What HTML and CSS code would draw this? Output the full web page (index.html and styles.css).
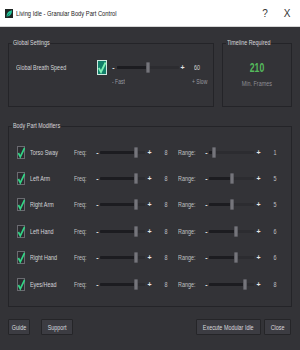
FILE: index.html
```html
<!DOCTYPE html>
<html lang="en">
<head>
    <meta charset="UTF-8">
    <meta name="viewport" content="width=device-width, initial-scale=1.0">
    <title>Living Idle - Granular Body Part Control</title>
    <link rel="stylesheet" href="styles.css">
</head>
<body>
    <div class="titlebar">
        <svg class="app-icon" width="8" height="9" viewBox="0 0 8 9">
            <rect width="8" height="9" fill="#1f2624"/>
            <path d="M1.5 7.5 C1.5 4 3.5 1.8 7 1.3 C7 4.8 5.5 7 2.5 7.5 Z" fill="#25c79c"/>
            <path d="M1.6 8 L4.5 4.3" stroke="#0f5b48" stroke-width="0.7"/>
        </svg>
        <span class="title sq">Living Idle - Granular Body Part Control</span>
        <span class="tb-btn help">?</span>
        <span class="tb-btn">X</span>
    </div>

    <div class="content">
        <div class="top-row">
            <fieldset class="group global">
                <legend><span class="sq">Global Settings</span></legend>
                <div class="breath-row">
                    <span class="breath-label sq">Global Breath Speed</span>
                    <svg class="check-big" width="10" height="15" viewBox="0 0 10 15">
                        <rect x="0.5" y="0.5" width="9" height="14" fill="#12806a" stroke="#cfe9df"/>
                        <path d="M1.8 8 L4 12 L8.6 2.5" fill="none" stroke="#7ef0b4" stroke-width="1.8"/>
                    </svg>
                    <div class="slider breath-slider">
                        <span class="minus">-</span>
                        <div class="track"><div class="fill" style="width:50%"></div><div class="handle" style="left:50%"></div></div>
                        <span class="plus">+</span>
                    </div>
                    <span class="breath-value sq">60</span>
                </div>
                <div class="hints">
                    <span class="sq">- Fast</span>
                    <span class="sq">+ Slow</span>
                </div>
            </fieldset>

            <fieldset class="group timeline">
                <legend><span class="sq">Timeline Required</span></legend>
                <div class="frames"><span class="sq-c">210</span></div>
                <div class="frames-label"><span class="sq-c">Min. Frames</span></div>
            </fieldset>
        </div>

        <fieldset class="group parts">
            <legend><span class="sq">Body Part Modifiers</span></legend>
            <div class="part-list">
                <div class="part-row">
                    <svg class="check" width="8" height="13" viewBox="0 0 8 13"><rect x="0.5" y="0.5" width="7" height="12" fill="#2b2b2f" stroke="#6a6a70"/><path d="M1.4 7 L3.3 10.8 L7.6 1.8" fill="none" stroke="#33d486" stroke-width="1.7"/></svg>
                    <span class="part-name sq">Torso Sway</span>
                    <span class="param sq">Freq:</span>
                    <div class="slider"><span class="minus">-</span><div class="track"><div class="fill" style="width:80%"></div><div class="handle" style="left:80%"></div></div><span class="plus">+</span></div>
                    <span class="value"><span class="sq-c">8</span></span>
                    <span class="param sq">Range:</span>
                    <div class="slider"><span class="minus">-</span><div class="track"><div class="fill" style="width:10%"></div><div class="handle" style="left:10%"></div></div><span class="plus">+</span></div>
                    <span class="value"><span class="sq-c">1</span></span>
                </div>
                <div class="part-row">
                    <svg class="check" width="8" height="13" viewBox="0 0 8 13"><rect x="0.5" y="0.5" width="7" height="12" fill="#2b2b2f" stroke="#6a6a70"/><path d="M1.4 7 L3.3 10.8 L7.6 1.8" fill="none" stroke="#33d486" stroke-width="1.7"/></svg>
                    <span class="part-name sq">Left Arm</span>
                    <span class="param sq">Freq:</span>
                    <div class="slider"><span class="minus">-</span><div class="track"><div class="fill" style="width:80%"></div><div class="handle" style="left:80%"></div></div><span class="plus">+</span></div>
                    <span class="value"><span class="sq-c">8</span></span>
                    <span class="param sq">Range:</span>
                    <div class="slider"><span class="minus">-</span><div class="track"><div class="fill" style="width:50%"></div><div class="handle" style="left:50%"></div></div><span class="plus">+</span></div>
                    <span class="value"><span class="sq-c">5</span></span>
                </div>
                <div class="part-row">
                    <svg class="check" width="8" height="13" viewBox="0 0 8 13"><rect x="0.5" y="0.5" width="7" height="12" fill="#2b2b2f" stroke="#6a6a70"/><path d="M1.4 7 L3.3 10.8 L7.6 1.8" fill="none" stroke="#33d486" stroke-width="1.7"/></svg>
                    <span class="part-name sq">Right Arm</span>
                    <span class="param sq">Freq:</span>
                    <div class="slider"><span class="minus">-</span><div class="track"><div class="fill" style="width:80%"></div><div class="handle" style="left:80%"></div></div><span class="plus">+</span></div>
                    <span class="value"><span class="sq-c">8</span></span>
                    <span class="param sq">Range:</span>
                    <div class="slider"><span class="minus">-</span><div class="track"><div class="fill" style="width:50%"></div><div class="handle" style="left:50%"></div></div><span class="plus">+</span></div>
                    <span class="value"><span class="sq-c">5</span></span>
                </div>
                <div class="part-row">
                    <svg class="check" width="8" height="13" viewBox="0 0 8 13"><rect x="0.5" y="0.5" width="7" height="12" fill="#2b2b2f" stroke="#6a6a70"/><path d="M1.4 7 L3.3 10.8 L7.6 1.8" fill="none" stroke="#33d486" stroke-width="1.7"/></svg>
                    <span class="part-name sq">Left Hand</span>
                    <span class="param sq">Freq:</span>
                    <div class="slider"><span class="minus">-</span><div class="track"><div class="fill" style="width:80%"></div><div class="handle" style="left:80%"></div></div><span class="plus">+</span></div>
                    <span class="value"><span class="sq-c">8</span></span>
                    <span class="param sq">Range:</span>
                    <div class="slider"><span class="minus">-</span><div class="track"><div class="fill" style="width:60%"></div><div class="handle" style="left:60%"></div></div><span class="plus">+</span></div>
                    <span class="value"><span class="sq-c">6</span></span>
                </div>
                <div class="part-row">
                    <svg class="check" width="8" height="13" viewBox="0 0 8 13"><rect x="0.5" y="0.5" width="7" height="12" fill="#2b2b2f" stroke="#6a6a70"/><path d="M1.4 7 L3.3 10.8 L7.6 1.8" fill="none" stroke="#33d486" stroke-width="1.7"/></svg>
                    <span class="part-name sq">Right Hand</span>
                    <span class="param sq">Freq:</span>
                    <div class="slider"><span class="minus">-</span><div class="track"><div class="fill" style="width:80%"></div><div class="handle" style="left:80%"></div></div><span class="plus">+</span></div>
                    <span class="value"><span class="sq-c">8</span></span>
                    <span class="param sq">Range:</span>
                    <div class="slider"><span class="minus">-</span><div class="track"><div class="fill" style="width:60%"></div><div class="handle" style="left:60%"></div></div><span class="plus">+</span></div>
                    <span class="value"><span class="sq-c">6</span></span>
                </div>
                <div class="part-row">
                    <svg class="check" width="8" height="13" viewBox="0 0 8 13"><rect x="0.5" y="0.5" width="7" height="12" fill="#2b2b2f" stroke="#6a6a70"/><path d="M1.4 7 L3.3 10.8 L7.6 1.8" fill="none" stroke="#33d486" stroke-width="1.7"/></svg>
                    <span class="part-name sq">Eyes/Head</span>
                    <span class="param sq">Freq:</span>
                    <div class="slider"><span class="minus">-</span><div class="track"><div class="fill" style="width:80%"></div><div class="handle" style="left:80%"></div></div><span class="plus">+</span></div>
                    <span class="value"><span class="sq-c">8</span></span>
                    <span class="param sq">Range:</span>
                    <div class="slider"><span class="minus">-</span><div class="track"><div class="fill" style="width:80%"></div><div class="handle" style="left:80%"></div></div><span class="plus">+</span></div>
                    <span class="value"><span class="sq-c">8</span></span>
                </div>
            </div>
        </fieldset>

        <div class="buttons">
            <button type="button" class="btn btn-guide"><span class="sq-c">Guide</span></button>
            <button type="button" class="btn btn-support"><span class="sq-c">Support</span></button>
            <button type="button" class="btn btn-execute"><span class="sq-c">Execute Modular Idle</span></button>
            <button type="button" class="btn btn-close"><span class="sq-c">Close</span></button>
        </div>
    </div>
</body>
</html>
```

FILE: styles.css
```css
* {
    margin: 0;
    padding: 0;
    box-sizing: border-box;
}

body {
    width: 300px;
    height: 350px;
    overflow: hidden;
    background-color: #333337;
    font-family: "Liberation Sans", Arial, sans-serif;
    font-size: 7.5px;
    color: #cfcfd3;
}

/* the dialog text is drawn narrow, like the squeezed capture */
.sq,
.sq-c {
    display: inline-block;
    white-space: nowrap;
    transform: scaleX(0.72);
    transform-origin: 0 50%;
}

.sq-c {
    transform-origin: 50% 50%;
}

/* title bar */
.titlebar {
    height: 27px;
    display: flex;
    align-items: center;
    padding-left: 5px;
    background: #ffffff;
    border-bottom: 1px solid #d6d6d6;
    color: #1b1b1b;
}

.app-icon {
    margin-right: 3px;
}

.title {
    font-size: 8px;
}

.tb-btn {
    width: 22px;
    text-align: center;
    font-size: 10px;
    color: #333;
}

.tb-btn.help {
    margin-left: auto;
}

.titlebar .tb-btn:last-child {
    margin-right: 2px;
}

/* layout */
.content {
    padding: 11px 8px 0;
}

.top-row {
    display: flex;
    gap: 8px;
}

.group {
    border: 1px solid #242428;
    min-width: 0;
}

.group legend {
    margin-left: 3px;
    padding: 0 1px;
    line-height: 10px;
    font-size: 7.5px;
    color: #d6d6da;
}

.global legend {
    width: 38px;
}

.timeline legend {
    width: 44px;
}

.parts legend {
    width: 49px;
}

/* global settings */
.global {
    width: 206px;
    height: 69px;
}

.breath-row {
    display: flex;
    align-items: center;
    height: 15px;
    margin-top: 12px;
    padding-left: 7px;
}

.breath-label {
    width: 81px;
    color: #d4d4d8;
}

.check-big {
    display: block;
}

.slider {
    display: flex;
    align-items: center;
}

.slider .minus,
.slider .plus {
    font-weight: bold;
    font-size: 7px;
    color: #e6e6e6;
    text-align: center;
}

.slider .minus {
    width: 5px;
}

.slider .plus {
    width: 9px;
}

.breath-slider {
    width: 76px;
    margin-left: 3px;
}

.breath-slider .minus,
.breath-slider .plus {
    width: 7px;
}

.track {
    flex: 1;
    position: relative;
    height: 3px;
    background: #2c2c30;
    border-radius: 1px;
}

.fill {
    height: 3px;
    background: #1c1c20;
    border-radius: 1px;
}

.handle {
    position: absolute;
    top: -4px;
    width: 4px;
    height: 11px;
    margin-left: -2px;
    background: #75757b;
    border: 1px solid #5c5c62;
    border-radius: 1px;
}

.breath-value {
    margin-left: 8px;
    color: #d4d4d8;
}

.hints {
    display: flex;
    margin: 3px 0 0 103px;
    line-height: 8px;
    font-size: 7px;
    color: #9a9aa0;
}

.hints span:first-child {
    width: 83px;
}

/* timeline */
.timeline {
    width: 70px;
    height: 69px;
}

.frames,
.frames-label {
    text-align: center;
}

.frames {
    margin-top: 14px;
    line-height: 12px;
    font-size: 12px;
    font-weight: bold;
    color: #55ba5c;
}

.frames-label {
    margin-top: 6px;
    line-height: 8px;
    font-size: 7.5px;
    color: #8e8e94;
}

/* body part modifiers */
.parts {
    height: 186px;
    margin-top: 14px;
}

.part-list {
    padding: 8px 0 0 8px;
}

.part-row {
    display: grid;
    grid-template-columns: 13px 44px 21px 59px 24px 26px 59px 24px;
    align-items: center;
    height: 26.4px;
}

.check {
    display: block;
}

.part-name {
    color: #d4d4d8;
}

.param {
    color: #c0c0c5;
}

.value {
    text-align: center;
    color: #c0c0c5;
}

/* buttons */
.buttons {
    display: flex;
    margin-top: 12px;
    padding-right: 1px;
}

.btn {
    height: 16px;
    overflow: hidden;
    background: #3c3c42;
    border: 1px solid #252528;
    border-radius: 1px;
    color: #dadade;
    font-family: inherit;
    font-size: 7.5px;
}

.btn .sq-c {
    margin: 0 -6px;
}

.btn-guide {
    width: 22px;
}

.btn-support {
    width: 32px;
    margin-left: 11px;
}

.btn-execute {
    width: 65px;
    margin-left: auto;
}

.btn-close {
    width: 27px;
    margin-left: 3px;
}
```
